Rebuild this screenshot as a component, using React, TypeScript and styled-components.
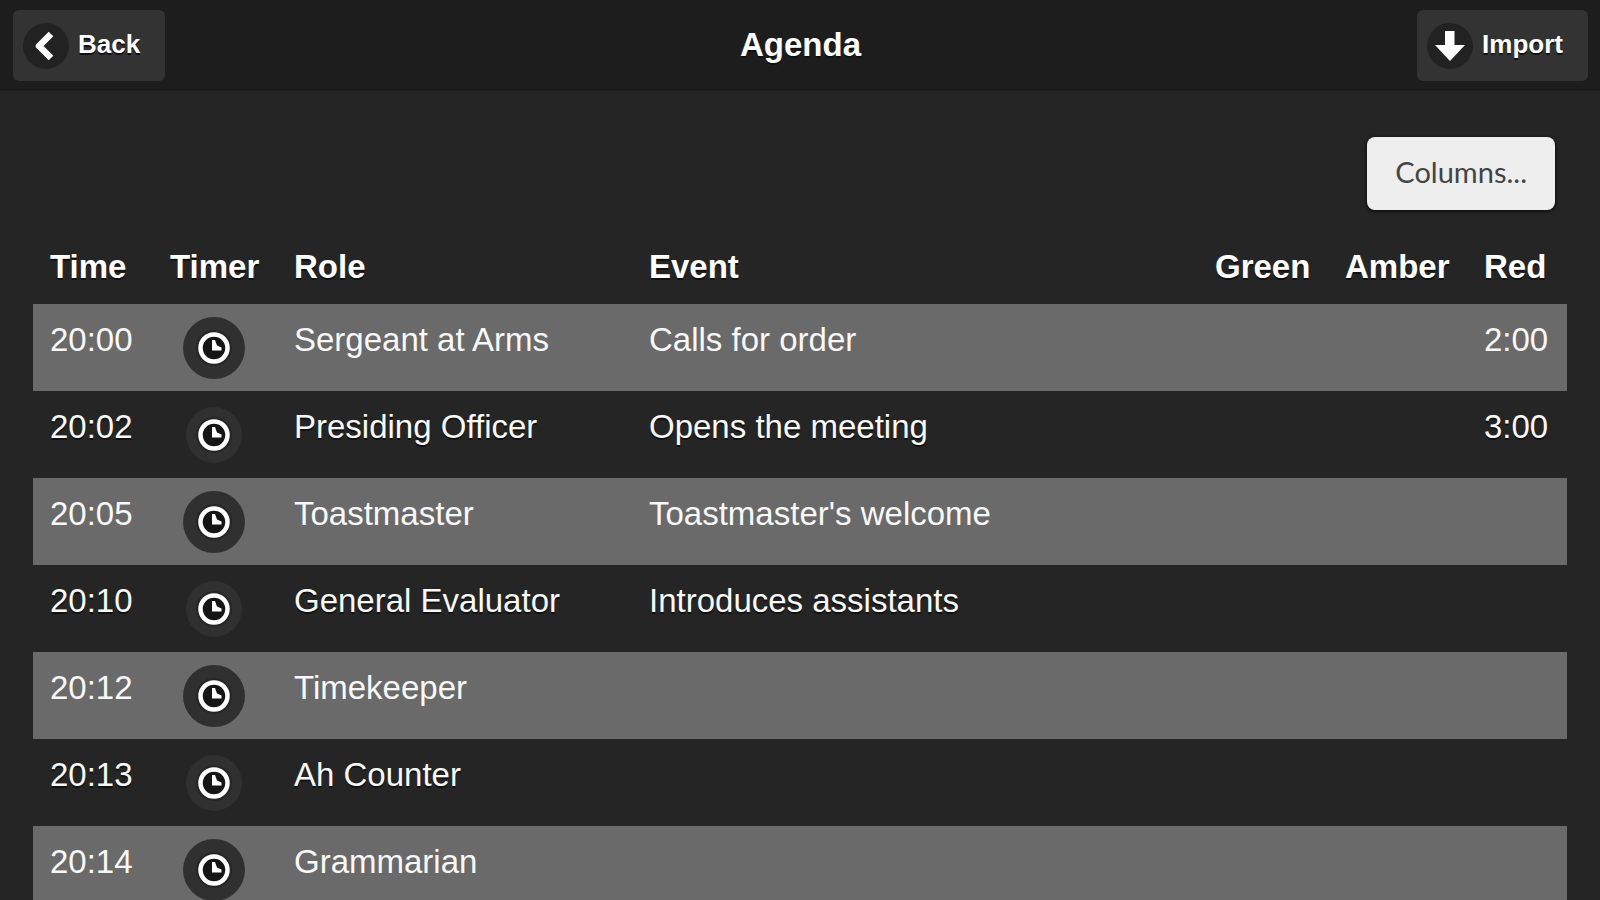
import React from "react";
import styled, { createGlobalStyle } from "styled-components";

const GlobalStyle = createGlobalStyle`
  * { box-sizing: border-box; }
  html, body { margin: 0; background: #252525; }
  body {
    color: #fff;
    font-family: "Liberation Sans", Arial, sans-serif;
    font-size: 33px;
    line-height: 40px;
    text-shadow: 0 2px 0 #111;
    overflow-x: hidden;
  }
`;

const Page = styled.div`
  height: 100vh;
  overflow: hidden;
`;

const Header = styled.header`
  display: grid;
  grid-template-columns: 1fr auto 1fr;
  align-items: start;
  padding: 10px 12px 8px 13px;
  background: #1d1d1d;
  border-bottom: 2px solid #1b1b1b;
`;

const Title = styled.h1`
  margin: 0;
  padding-top: 15px;
  font-size: 33px;
  line-height: 40px;
  font-weight: bold;
`;

const HeaderButton = styled.button<{ $end?: boolean }>`
  justify-self: ${(p) => (p.$end ? "end" : "start")};
  display: flex;
  align-items: center;
  gap: 9px;
  height: 71px;
  padding: 0 25px 0 10px;
  border: 0;
  border-radius: 6px;
  background: #333;
  color: #fff;
  font: bold 26px/32px "Liberation Sans", Arial, sans-serif;
  text-shadow: 0 2px 0 #111;
`;

const ButtonLabel = styled.span`
  padding-bottom: 3px;
`;

const Disc = styled.span`
  display: flex;
  align-items: center;
  justify-content: center;
  width: 46px;
  height: 46px;
  border-radius: 50%;
  background: #222;
`;

const Main = styled.main`
  padding: 46px 33px 0;
`;

const Tools = styled.div`
  display: flex;
  justify-content: flex-end;
  padding: 0 12px 12px 0;
`;

const ColumnsButton = styled.button`
  height: 73px;
  padding: 0 28px 4px;
  border: 0;
  border-radius: 8px;
  background: #eee;
  color: #444;
  font: 29px/36px Lato, sans-serif;
  box-shadow: 0 1px 3px 1px #111;
`;

const Table = styled.table`
  width: 100%;
  table-layout: fixed;
  border-collapse: collapse;
`;

const Column = styled.col<{ $width?: number }>`
  width: ${(p) => (p.$width ? p.$width + "px" : "auto")};
`;

const HeadCell = styled.th`
  height: 82px;
  padding: 25px 0 17px 17px;
  text-align: left;
  font-weight: bold;
  white-space: nowrap;
`;

const Row = styled.tr`
  &:nth-child(odd) { background: #6a6a6a; text-shadow: none; }
`;

const Cell = styled.td`
  height: 87px;
  padding: 16px 0 0 17px;
  color: #f8f8f8;
  vertical-align: top;
  white-space: nowrap;
`;

const TimerCell = styled(Cell)`
  padding: 0 3px 0 0;
  vertical-align: middle;
`;

const TimerButton = styled.button`
  display: flex;
  align-items: center;
  justify-content: center;
  width: 56px;
  height: 56px;
  margin: 0 auto;
  padding: 0;
  border: 0;
  border-radius: 50%;
  background: #303030;
  ${Row}:nth-child(odd) & { box-shadow: 0 0 0 3px #303030; }
`;

const ClockIcon = () => (
  <svg width="46" height="46" viewBox="0 0 46 46" fill="none" aria-hidden="true">
    <circle cx="23" cy="23" r="18" fill="#262626" />
    <circle cx="23" cy="23" r="13.500" fill="#151515" stroke="#fff" strokeWidth="4.500" />
    <path d="M21 15h3l2 5.500 4.500 2v3H21z" fill="#fff" />
  </svg>
);

const BackIcon = () => (
  <svg width="46" height="46" viewBox="0 0 46 46" fill="none" aria-hidden="true">
    <path d="M28 11L16 23l12 12" stroke="#fff" strokeWidth="6.500" strokeLinejoin="round" />
  </svg>
);

const DownIcon = () => (
  <svg width="46" height="46" viewBox="0 0 46 46" aria-hidden="true">
    <path d="M18 8h9.500v14H38L23 38 8 22h10z" fill="#fff" />
  </svg>
);

type Item = { time: string; role: string; event?: string; red?: string };

const items: Item[] = [
  { time: "20:00", role: "Sergeant at Arms", event: "Calls for order", red: "2:00" },
  { time: "20:02", role: "Presiding Officer", event: "Opens the meeting", red: "3:00" },
  { time: "20:05", role: "Toastmaster", event: "Toastmaster's welcome" },
  { time: "20:10", role: "General Evaluator", event: "Introduces assistants" },
  { time: "20:12", role: "Timekeeper" },
  { time: "20:13", role: "Ah Counter" },
  { time: "20:14", role: "Grammarian" },
];

export default function App() {
  return (
    <Page>
      <GlobalStyle />
      <Header>
        <HeaderButton type="button">
          <Disc><BackIcon /></Disc>
          <ButtonLabel>Back</ButtonLabel>
        </HeaderButton>
        <Title>Agenda</Title>
        <HeaderButton type="button" $end>
          <Disc><DownIcon /></Disc>
          <ButtonLabel>Import</ButtonLabel>
        </HeaderButton>
      </Header>
      <Main>
        <Tools><ColumnsButton type="button">Columns...</ColumnsButton></Tools>
        <Table>
          <colgroup>
            <Column $width={120} />
            <Column $width={124} />
            <Column $width={355} />
            <Column />
            <Column $width={130} />
            <Column $width={139} />
            <Column $width={100} />
          </colgroup>
          <thead>
            <tr>
              {["Time", "Timer", "Role", "Event", "Green", "Amber", "Red"].map((name) => (
                <HeadCell key={name} scope="col">{name}</HeadCell>
              ))}
            </tr>
          </thead>
          <tbody>
            {items.map((item) => (
              <Row key={item.time}>
                <Cell>{item.time}</Cell>
                <TimerCell>
                  <TimerButton type="button" aria-label={"Timer for " + item.role}>
                    <ClockIcon />
                  </TimerButton>
                </TimerCell>
                <Cell>{item.role}</Cell>
                <Cell>{item.event}</Cell>
                <Cell />
                <Cell />
                <Cell>{item.red}</Cell>
              </Row>
            ))}
          </tbody>
        </Table>
      </Main>
    </Page>
  );
}
